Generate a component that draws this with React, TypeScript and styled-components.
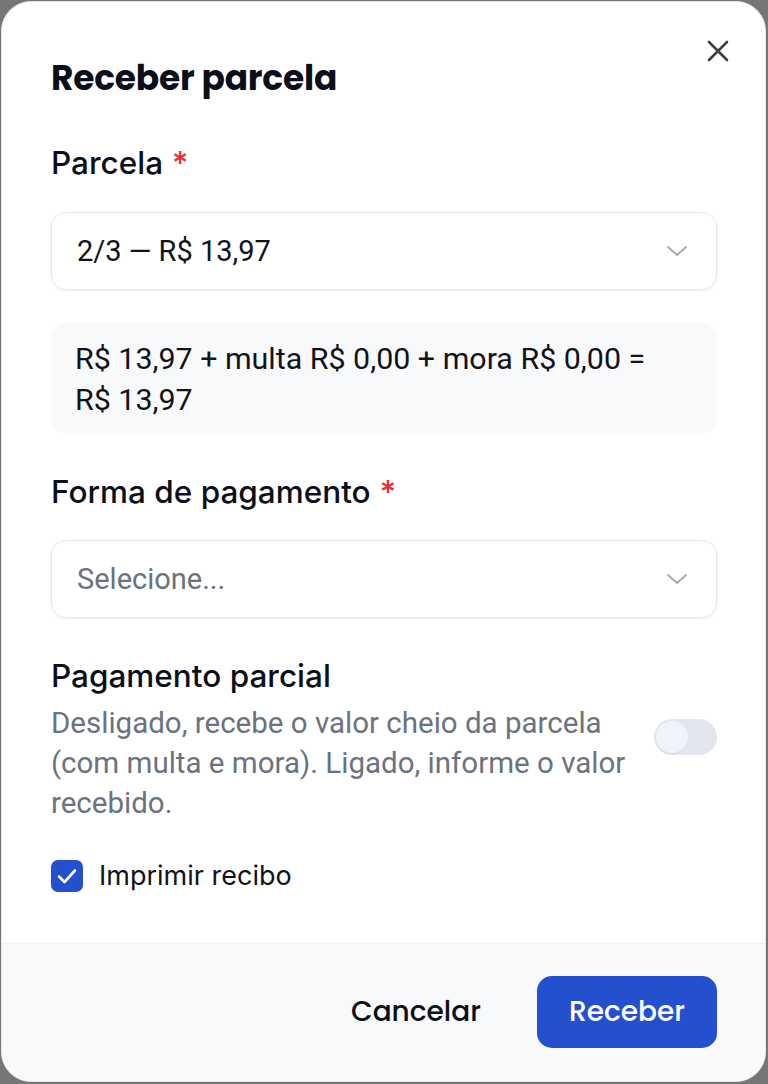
import React from "react";
import styled, { createGlobalStyle } from "styled-components";

const Global = createGlobalStyle`
  html, body { margin: 0; padding: 0; background: #767676; }
  #root { width: 768px; height: 1084px; }
  * { box-sizing: border-box; }
`;

const Backdrop = styled.div`
  width: 768px;
  height: 1084px;
  padding: 1px 2px 2px 1px;
  display: flex;
`;

const Dialog = styled.div`
  position: relative;
  flex: 1;
  display: flex;
  flex-direction: column;
  background: #ffffff;
  border: 1.5px solid #e3e8ef;
  border-radius: 30px;
  overflow: hidden;
  font-family: Inter, "Noto Sans", sans-serif;
`;

const Body = styled.div`
  flex: 1;
  display: flex;
  flex-direction: column;
  padding: 54px 48px 0 49px;
`;

const CloseButton = styled.button`
  position: absolute;
  top: 27px;
  right: 25px;
  width: 44px;
  height: 44px;
  border: none;
  background: transparent;
  display: flex;
  align-items: center;
  justify-content: center;
  padding: 0;
  color: #3b3f46;
`;

const Title = styled.h2`
  margin: 0;
  font-family: Poppins, Lato, Inter, sans-serif;
  font-weight: 700;
  font-size: 34.4px;
  line-height: 44px;
  letter-spacing: -0.2px;
  color: #0b0f19;
`;

const Label = styled.div<{ $top: number }>`
  margin-top: ${(p) => p.$top}px;
  font-size: 31.5px;
  line-height: 40px;
  font-weight: 500;
  color: #0b0f19;
`;

const Star = styled.span`
  color: #ef2b36;
  margin-left: 9px;
`;

const Select = styled.div<{ $top: number; $placeholder?: boolean }>`
  margin-top: ${(p) => p.$top}px;
  height: 78px;
  border: 1.5px solid #e2e7ee;
  border-radius: 15px;
  box-shadow: 0 1px 3px rgba(15, 23, 42, 0.08);
  display: flex;
  align-items: center;
  justify-content: space-between;
  padding: 0 28px 0 25px;
  font-family: Roboto, "Noto Sans", sans-serif;
  font-size: 29px;
  color: ${(p) => (p.$placeholder ? "#6b7280" : "#111318")};
`;

const Summary = styled.div`
  margin-top: 33px;
  background: #f8f9fb;
  border-radius: 15px;
  padding: 14.5px 34px 14.5px 24px;
  font-family: Roboto, "Noto Sans", sans-serif;
  font-size: 30.4px;
  line-height: 41px;
  color: #111318;
`;

const ToggleRow = styled.div`
  margin-top: 38px;
  display: flex;
  align-items: center;
  gap: 18px;
`;

const ToggleText = styled.div`
  flex: 1;
  display: flex;
  flex-direction: column;
  gap: 7px;
`;

const SubLabel = styled.div`
  font-size: 31.5px;
  line-height: 40px;
  font-weight: 500;
  color: #0b0f19;
`;

const Description = styled.div`
  font-family: Roboto, "Noto Sans", sans-serif;
  font-size: 29.5px;
  line-height: 40px;
  color: #6b7280;
`;

const Switch = styled.div`
  width: 63px;
  height: 36px;
  border-radius: 18px;
  background: #e2e7ee;
  padding: 2px;
  display: flex;
  align-items: center;
  flex-shrink: 0;
  margin-top: -5px;
`;

const Knob = styled.div`
  width: 32px;
  height: 32px;
  border-radius: 50%;
  background: #eff4fc;
  box-shadow: 0 1px 2px rgba(0, 0, 0, 0.06);
`;

const CheckRow = styled.label`
  margin-top: 33px;
  display: flex;
  align-items: center;
  gap: 16px;
  font-size: 27px;
  line-height: 40px;
  color: #111318;
`;

const CheckBox = styled.span`
  width: 32px;
  height: 32px;
  border-radius: 7px;
  background: #2450d0;
  display: flex;
  align-items: center;
  justify-content: center;
`;

const Footer = styled.div`
  height: 138px;
  border-top: 1.5px solid #edf0f5;
  background: #f8f9fb;
  display: flex;
  align-items: center;
  justify-content: flex-end;
  gap: 27px;
  padding: 0 48px 2px 0;
`;

const Button = styled.button<{ $primary?: boolean }>`
  height: 72px;
  width: ${(p) => (p.$primary ? "180px" : "188px")};
  padding: 0;
  border: none;
  border-radius: 15px;
  font-family: Poppins, Lato, Inter, sans-serif;
  font-size: 28px;
  font-weight: 500;
  background: ${(p) => (p.$primary ? "#2450d0" : "transparent")};
  color: ${(p) => (p.$primary ? "#ffffff" : "#0b0f19")};
`;

const Chevron = () => (
  <svg width="22" height="14" viewBox="0 0 22 14" fill="none">
    <path d="M2 3l9 8 9-8" stroke="#a5abb5" strokeWidth="2" strokeLinecap="round" strokeLinejoin="round" />
  </svg>
);

export default function App() {
  return (
    <>
      <Global />
      <Backdrop>
        <Dialog>
          <CloseButton aria-label="Fechar">
            <svg width="22" height="22" viewBox="0 0 22 22" fill="none">
              <path d="M2 2l18 18M20 2L2 20" stroke="currentColor" strokeWidth="2.6" strokeLinecap="round" />
            </svg>
          </CloseButton>
          <Body>
            <Title>Receber parcela</Title>
            <Label $top={43}>
              Parcela<Star>*</Star>
            </Label>
            <Select $top={29}>
              <span>2/3 — R$ 13,97</span>
              <Chevron />
            </Select>
            <Summary>R$ 13,97 + multa R$ 0,00 + mora R$ 0,00 = R$ 13,97</Summary>
            <Label $top={38}>
              Forma de pagamento<Star>*</Star>
            </Label>
            <Select $top={28} $placeholder>
              <span>Selecione...</span>
              <Chevron />
            </Select>
            <ToggleRow>
              <ToggleText>
                <SubLabel>Pagamento parcial</SubLabel>
                <Description>
                  Desligado, recebe o valor cheio da parcela (com multa e mora). Ligado, informe o valor recebido.
                </Description>
              </ToggleText>
              <Switch>
                <Knob />
              </Switch>
            </ToggleRow>
            <CheckRow>
              <CheckBox>
                <svg width="20" height="16" viewBox="0 0 20 16" fill="none">
                  <path d="M2 8.5l5.5 5.5L18 2.5" stroke="#fff" strokeWidth="2.6" strokeLinecap="round" strokeLinejoin="round" />
                </svg>
              </CheckBox>
              Imprimir recibo
            </CheckRow>
          </Body>
          <Footer>
            <Button>Cancelar</Button>
            <Button $primary>Receber</Button>
          </Footer>
        </Dialog>
      </Backdrop>
    </>
  );
}
